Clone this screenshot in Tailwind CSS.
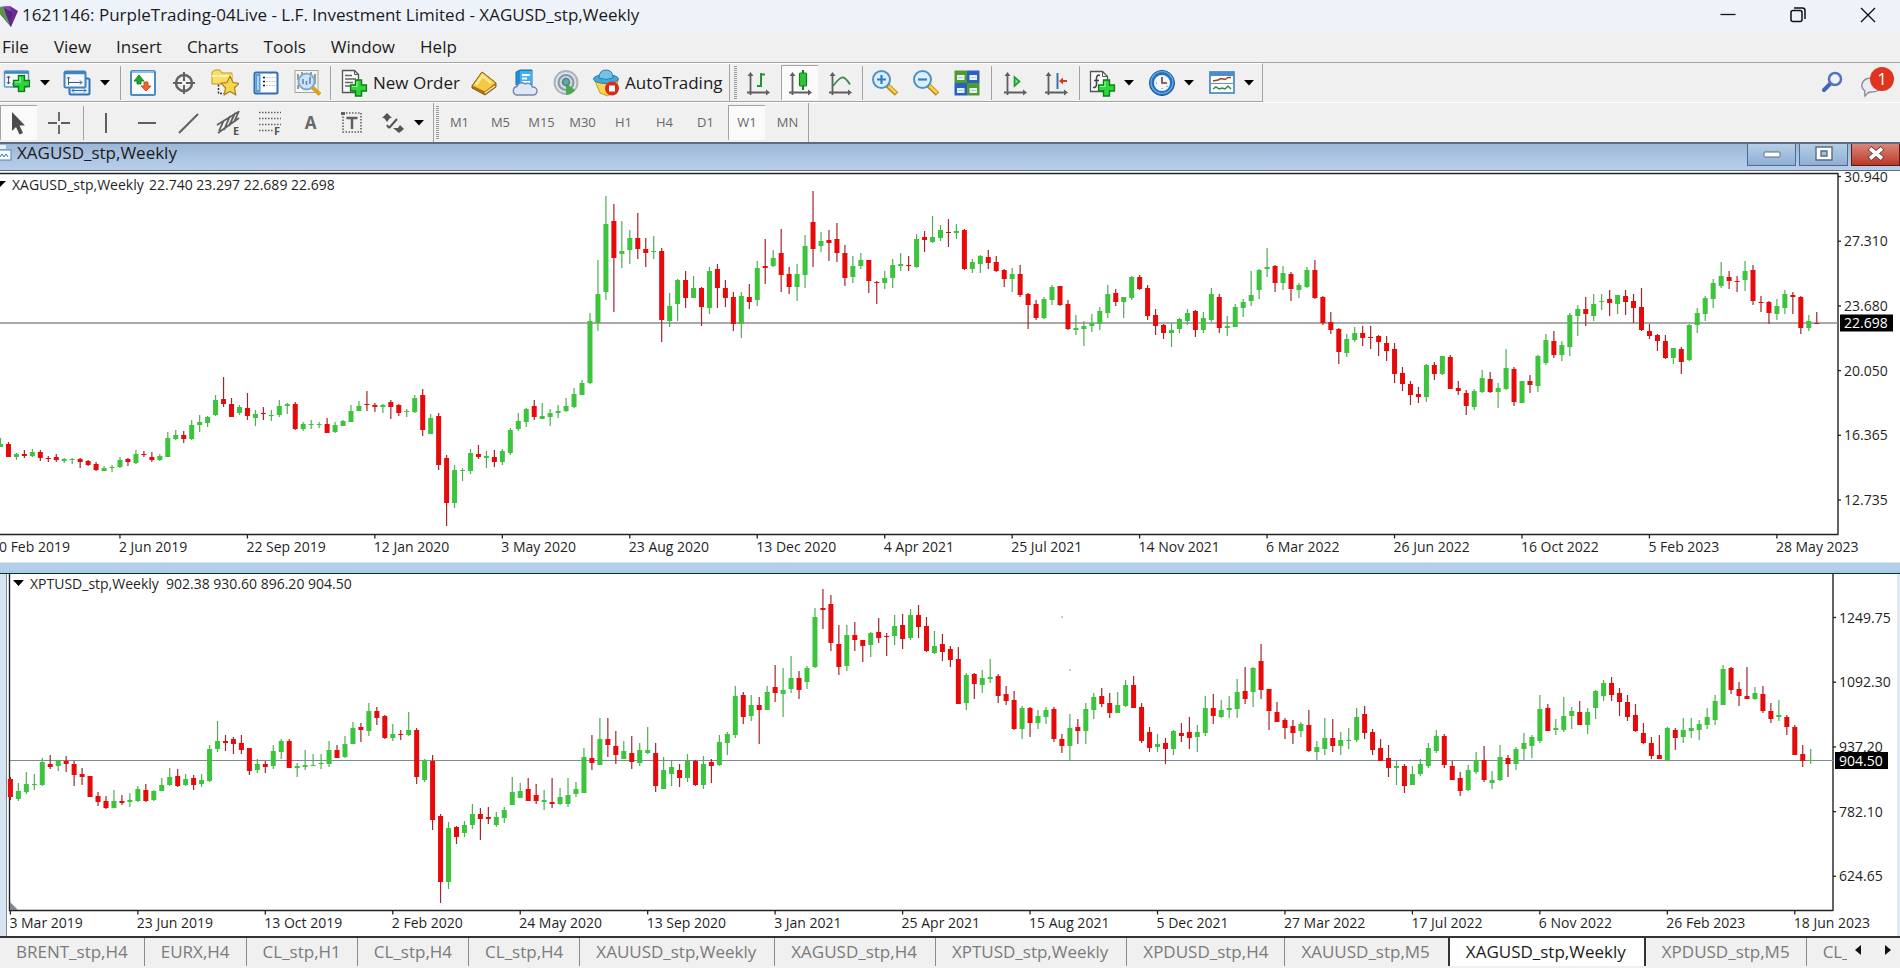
<!DOCTYPE html>
<html lang="en">

<head>
    <meta charset="UTF-8">
    <meta name="viewport" content="width=device-width, initial-scale=1.0">
    <title>XAGUSD_stp,Weekly</title>

    <script src="https://cdn.jsdelivr.net/npm/@tailwindcss/browser@4"></script>
</head>

<body class="bg-[#f0f0f0] font-['Open_Sans','Noto_Sans',sans-serif] text-[17px] text-[#1b1b1b] overflow-x-hidden">

    <!-- shared shapes -->
    <svg class="hidden">
        <symbol id="plus" viewBox="0 0 18 18">
            <path d="M6 1h6v5h5v6h-5v5H6v-5H1V6h5z" fill="#2fd63b" stroke="#0b7d18" stroke-width="1.4" />
            <path d="M7.500 2.500v5h-5" fill="none" stroke="#9df5a0" stroke-width="1.200" />
        </symbol>
        <symbol id="axes" viewBox="0 0 28 28">
            <path d="M6.500 5v21M3 23.500h21" stroke="#5f5f5f" stroke-width="1.800" fill="none" />
            <path d="M6.500 3l-3 4h6zM26 23.500l-4-3v6z" fill="#5f5f5f" />
        </symbol>
        <symbol id="caret" viewBox="0 0 10 6">
            <path d="M0 0h10L5 5.500z" fill="#000" />
        </symbol>
    </svg>

    <!-- title bar -->
    <div class="h-8 pb-[2px] bg-[#eef3f9] flex items-center justify-between">
        <div class="flex items-center">
            <svg class="w-[22px] h-6" viewBox="0 0 22 24">
                <path d="M0 4L10 3l8 5-7 16L0 11z" fill="#6d2c91" />
                <path d="M0 4l10-1 1 5-11 3z" fill="#8a4bb0" />
                <path d="M0 4l3 0 8 20L0 10z" fill="#5b9a3c" />
                <path d="M4 5l7 19 1-15z" fill="#5a2384" />
            </svg>
            <h1>1621146: PurpleTrading-04Live - L.F. Investment Limited - XAGUSD_stp,Weekly</h1>
        </div>
        <div class="flex items-center pr-[22px] gap-[50px]">
            <button aria-label="Minimize" class="w-5 h-5"><svg viewBox="0 0 20 20"><path d="M2.500 9.500h15" stroke="#111" stroke-width="1.300" /></svg></button>
            <button aria-label="Restore" class="w-5 h-5"><svg viewBox="0 0 20 20" fill="none" stroke="#111" stroke-width="1.500"><rect x="3" y="5.500" width="11" height="11" rx="2" /><path d="M6 3h8.500q2.500 0 2.500 2.500V14" /></svg></button>
            <button aria-label="Close" class="w-5 h-5"><svg viewBox="0 0 20 20"><path d="M3 3l14 14M17 3L3 17" stroke="#111" stroke-width="1.400" /></svg></button>
        </div>
    </div>

    <!-- menu -->
    <nav class="h-[30px] pl-[2px] flex items-center gap-[25px]">
        <button>File</button>
        <button>View</button>
        <button>Insert</button>
        <button>Charts</button>
        <button>Tools</button>
        <button>Window</button>
        <button>Help</button>
    </nav>

    <!-- standard toolbar -->
    <div class="h-10 border-t border-[#a3a3a3] flex justify-between">
        <div class="flex items-center border-b border-r border-[#a3a3a3] border-t border-t-white pr-2">
            <button aria-label="New chart" class="w-[34px] flex justify-center">
                <svg class="w-7 h-7" viewBox="0 0 28 28">
                    <rect x="1.500" y="2" width="24" height="16" rx="1" fill="#f4f9fe" stroke="#5a9bd0" stroke-width="1.500" />
                    <path d="M1.500 3.500h24" stroke="#3f83c0" stroke-width="2.500" />
                    <path d="M5.500 7v8M3.800 9l1.700-2 1.700 2M3.800 13l1.700 2 1.700-2M9 15h5" stroke="#4b5560" fill="none" />
                    <use href="#plus" x="9.500" y="5.500" width="18" height="18" />
                </svg>
            </button>
            <button aria-label="New chart list" class="w-[22px] flex justify-center"><svg class="w-[10px] h-[6px]"><use href="#caret" /></svg></button>
            <button aria-label="Profiles" class="w-[42px] flex justify-center">
                <svg class="w-7 h-7" viewBox="0 0 28 28">
                    <rect x="6.500" y="9.500" width="20" height="16" rx="1.500" fill="#e4effa" stroke="#3674b2" stroke-width="2" />
                    <path d="M9 21.500h14M9 21.500l2-2M9 21.500l2 2M23 21.500l-2-2M23 21.500l-2 2" stroke="#3b6fa5" fill="none" />
                    <rect x="1.500" y="2.500" width="21" height="16" rx="1.500" fill="#f4f9fe" stroke="#3f83c0" stroke-width="2" />
                    <path d="M1.500 4h21" stroke="#3f83c0" stroke-width="2.500" />
                    <path d="M5.500 8v8M5.500 13.500h13M17 11.500l2 2-2 2M4 9.500l1.500-1.500 1.500 1.500" stroke="#45576a" fill="none" />
                </svg>
            </button>
            <button aria-label="Profiles list" class="w-[14px] flex justify-center"><svg class="w-[10px] h-[6px]"><use href="#caret" /></svg></button>
            <div class="w-px h-[34px] bg-[#a3a3a3] ml-2 mr-[1px]"></div>
            <button aria-label="Market Watch" class="w-[41px] flex justify-center">
                <svg class="w-7 h-7" viewBox="0 0 28 28">
                    <rect x="2" y="2" width="24" height="24" rx="1.500" fill="#fbfdff" stroke="#4a8cc6" stroke-width="2" />
                    <path d="M3 3h22" stroke="#8fbde6" stroke-width="2" />
                    <path d="M10 6l5 6h-3v3H8v-3H5z" fill="#25a52b" stroke="#11771a" stroke-width=".8" />
                    <path d="M17 22l-5-5h3v-4h4v4h3z" fill="#f0642c" stroke="#c33d12" stroke-width=".8" />
                </svg>
            </button>
            <button aria-label="Data Window" class="w-[41px] flex justify-center">
                <svg class="w-7 h-7" viewBox="0 0 28 28" fill="none" stroke="#626262">
                    <circle cx="14" cy="14" r="8" stroke-width="2.500" />
                    <path d="M14 3v9M14 16v9M3 14h9M16 14h9" stroke-width="2" />
                </svg>
            </button>
            <button aria-label="Navigator" class="w-[41px] flex justify-center">
                <svg class="w-7 h-7" viewBox="0 0 28 28">
                    <path d="M1 15V3l3-2h5l2 3h10v11z" fill="#f9df6a" stroke="#c19a1d" />
                    <path d="M1 7h20" stroke="#fdf3b0" stroke-width="2" />
                    <path d="M7.500 15.500v9h6" stroke="#333" stroke-width="1.500" stroke-dasharray="2 1.500" fill="none" />
                    <path d="M19 7l3 6.500 6 .8-4.500 4.500 1.200 7L19 22.500l-5.700 3.300 1.200-7L10 14.300l6-.8z" fill="#fbd54b" stroke="#a9801c" stroke-width="1.200" />
                </svg>
            </button>
            <button aria-label="Terminal" class="w-[41px] flex justify-center">
                <svg class="w-7 h-7" viewBox="0 0 28 28">
                    <rect x="2.500" y="3.500" width="23" height="21" rx="1.500" fill="#fdfeff" stroke="#2f6fb0" stroke-width="2" />
                    <rect x="3.500" y="4.500" width="5" height="19" fill="#5b9bdc" />
                    <path d="M6 7v14" stroke="#cfe4f8" stroke-width="1.500" />
                    <path d="M11 8.500h2M11 12.500h2M11 16.500h2" stroke="#111" stroke-width="1.500" />
                    <path d="M14.500 8.500h9M14.500 12.500h9M14.500 16.500h9" stroke="#b8c2cc" stroke-dasharray="1.500 1" />
                </svg>
            </button>
            <button aria-label="Strategy Tester" class="w-[41px] flex justify-center">
                <svg class="w-7 h-7" viewBox="0 0 28 28">
                    <rect x="2" y="1.500" width="23" height="22" fill="#f7f5f0" stroke="#a8a49c" />
                    <path d="M5 5v6M9 3v5M18 3v6M22 5v10M5 16v4" stroke="#7a7a7a" stroke-width="1.500" />
                    <path d="M19 18l8 7.500" stroke="#d9a320" stroke-width="4" />
                    <circle cx="13.500" cy="12.500" r="8" fill="#c4e0f7" fill-opacity=".85" stroke="#7ba9d0" stroke-width="2" />
                    <path d="M10 15v-5M13.500 16v-4M17 15V8" stroke="#5c83a8" fill="none" stroke-width="1.500" />
                </svg>
            </button>
            <div class="w-px h-[34px] bg-[#a3a3a3] ml-[3px] mr-[9px]"></div>
            <button class="flex items-center gap-[5px] w-[123px]">
                <svg class="w-7 h-7 shrink-0" viewBox="0 0 28 28">
                    <path d="M2.500 1.500h12l4 4v18h-16z" fill="#fafafa" stroke="#555" stroke-width="1.300" />
                    <path d="M14.500 1.500v4h4" fill="none" stroke="#555" />
                    <path d="M5 6.500h7M5 10h11M5 13.500h8M5 17h6" stroke="#666" stroke-width="1.500" />
                    <use href="#plus" x="9.500" y="10" width="18" height="18" />
                </svg>
                New Order
            </button>
            <button aria-label="MetaEditor" class="w-[41px] flex justify-center">
                <svg class="w-7 h-7" viewBox="0 0 28 28">
                    <path d="M2 17L12 3l14 11v4L15 26 2 19z" fill="#b57a12" stroke="#8c5c0b" />
                    <path d="M2 17L12 3l14 11-11 9z" fill="#f5c944" stroke="#9a6a10" />
                    <path d="M6 16l6.500-9.500L21 14" fill="none" stroke="#fdeaa0" stroke-width="2.500" />
                    <path d="M15 24l10-7" stroke="#f7efd8" stroke-width="1.200" />
                </svg>
            </button>
            <button aria-label="Virtual Hosting" class="w-[41px] flex justify-center">
                <svg class="w-7 h-7" viewBox="0 0 28 28">
                    <path d="M5 3l4-2h12v15H5z" fill="#1f8fd8" stroke="#1670ae" />
                    <path d="M9 2h12v14H9z" fill="#42b1f2" />
                    <path d="M11 6h8M11 9.500h5M11 13h8" stroke="#fff" stroke-width="1.800" />
                    <path d="M6 26a4.300 4.300 0 0 1 0-8.500 5 5 0 0 1 8-2.500 5 5 0 0 1 7.500 3 4 4 0 0 1 1 8z" fill="#dfe7f5" stroke="#7585a8" stroke-width="1.400" />
                </svg>
            </button>
            <button aria-label="Signals" class="w-[41px] flex justify-center">
                <svg class="w-7 h-7" viewBox="0 0 28 28" fill="none">
                    <circle cx="14" cy="13.500" r="11.500" fill="#dfe4e6" stroke="#a9b5bd" stroke-width="2" />
                    <circle cx="14" cy="13.500" r="7.500" fill="#cfd8dc" stroke="#8696a3" stroke-width="2" />
                    <path d="M14 14v12a12 12 0 0 0 9-5z" fill="#46ab4d" />
                    <circle cx="14" cy="13" r="3.500" fill="#5fae85" stroke="#4c7fa8" stroke-width="1.500" />
                </svg>
            </button>
            <button class="flex items-center gap-[5px] ml-[6px]">
                <svg class="w-7 h-7 shrink-0" viewBox="0 0 28 28">
                    <path d="M3 12l5 12 8 3 8-6 2-10z" fill="#f7d452" stroke="#c59b20" />
                    <ellipse cx="14" cy="10" rx="12.500" ry="4.500" fill="#4aa5d4" stroke="#2b7fae" />
                    <path d="M7 9q0-8 7-8t7 8q-7 3-14 0z" fill="#73c3e8" stroke="#2b7fae" />
                    <circle cx="20" cy="19.500" r="7" fill="#d92a1c" />
                    <rect x="17" y="16.500" width="6" height="6" fill="#fff" />
                </svg>
                AutoTrading
            </button>
            <div class="w-px h-[38px] bg-[#a3a3a3] ml-[6px]"></div>
            <div class="w-[3px] h-[34px] ml-1 mr-[1px] bg-[repeating-linear-gradient(#9a9a9a_0_1px,#f0f0f0_1px_2px)]"></div>
            <button aria-label="Bar Chart" class="w-[41px] flex justify-center">
                <svg class="w-7 h-7" viewBox="0 0 28 28">
                    <use href="#axes" />
                    <path d="M17 4v14M17 5.500h4M13 17h4" stroke="#1d9a2c" stroke-width="2" fill="none" />
                </svg>
            </button>
            <button aria-label="Candlesticks" class="w-[37px] h-[35px] mx-[2px] flex justify-center items-center bg-[#fafafa] border-l border-t border-[#a3a3a3]">
                <svg class="w-7 h-7" viewBox="0 0 28 28">
                    <use href="#axes" />
                    <path d="M17 1v20" stroke="#12801d" stroke-width="2" />
                    <rect x="13.500" y="4" width="7" height="13" rx="1" fill="#2fc53b" stroke="#12801d" stroke-width="1.200" />
                </svg>
            </button>
            <button aria-label="Line Chart" class="w-[41px] flex justify-center">
                <svg class="w-7 h-7" viewBox="0 0 28 28">
                    <use href="#axes" />
                    <path d="M7 17q7-9 10-8.500t7 7" stroke="#3f8a48" stroke-width="1.800" fill="none" />
                </svg>
            </button>
            <div class="w-px h-[34px] bg-[#a3a3a3] ml-px mr-[2px]"></div>
            <button aria-label="Zoom In" class="w-[41px] flex justify-center">
                <svg class="w-7 h-7" viewBox="0 0 28 28">
                    <path d="M16 16l9.500 9" stroke="#b98a12" stroke-width="5" />
                    <path d="M17 16.500l8 7.500" stroke="#f5d24a" stroke-width="2.500" />
                    <circle cx="10.500" cy="10.500" r="8.500" fill="#dcf0fc" stroke="#4d93c8" stroke-width="2" />
                    <path d="M10.500 6v9M6 10.500h9" stroke="#2f7ebd" stroke-width="2.200" />
                </svg>
            </button>
            <button aria-label="Zoom Out" class="w-[41px] flex justify-center">
                <svg class="w-7 h-7" viewBox="0 0 28 28">
                    <path d="M16 16l9.500 9" stroke="#b98a12" stroke-width="5" />
                    <path d="M17 16.500l8 7.500" stroke="#f5d24a" stroke-width="2.500" />
                    <circle cx="10.500" cy="10.500" r="8.500" fill="#dcf0fc" stroke="#4d93c8" stroke-width="2" />
                    <path d="M6 10.500h9" stroke="#2f7ebd" stroke-width="2.200" />
                </svg>
            </button>
            <button aria-label="Tile Windows" class="w-[41px] flex justify-center">
                <svg class="w-7 h-7" viewBox="0 0 28 28">
                    <path d="M1.500 1.500h12.500v12.500h-12.500zM14 14h12.500v12.500h-12.500z" fill="#4e9b2e" />
                    <path d="M14 1.500h12.500v12.500h-12.500zM1.500 14h12.500v12.500h-12.500z" fill="#2a5fc4" />
                    <path d="M4 6h7.500v5h-7.500zM16.500 6h7.500v5h-7.500zM4 19h7.500v5h-7.500zM16.500 19h7.500v5h-7.500z" fill="#e9f0fa" />
                    <path d="M5 8.500h5M18 8.500h5M5 21.500h5M18 21.500h5" stroke="#b5c8e2" />
                </svg>
            </button>
            <div class="w-px h-[34px] bg-[#a3a3a3] mx-[3px]"></div>
            <button aria-label="Auto Scroll" class="w-[41px] flex justify-center">
                <svg class="w-7 h-7" viewBox="0 0 28 28">
                    <use href="#axes" />
                    <path d="M13.500 8l5 4.500-5 4.500z" fill="#7ddf84" stroke="#1c9a2a" stroke-width="1.600" />
                </svg>
            </button>
            <button aria-label="Chart Shift" class="w-[41px] flex justify-center">
                <svg class="w-7 h-7" viewBox="0 0 28 28">
                    <use href="#axes" />
                    <path d="M15.500 4v16" stroke="#3a72a8" stroke-width="2" />
                    <path d="M17 12l4-3.500v2.500h4v2h-4v2.500z" fill="#c8401c" />
                </svg>
            </button>
            <div class="w-px h-[34px] bg-[#a3a3a3] mx-[2px]"></div>
            <button aria-label="Indicators" class="w-[41px] flex justify-center">
                <svg class="w-7 h-7" viewBox="0 0 28 28">
                    <path d="M2.500 2.500h12l5 5v15h-17z" fill="#fafafa" stroke="#555" stroke-width="1.300" />
                    <path d="M14.500 2.500v5h5" fill="none" stroke="#555" />
                    <path d="M12 6.500q-3-1.500-3.500 2.500v6q0 4-3.500 3.500M6 11.500h5" fill="none" stroke="#444" stroke-width="1.600" />
                    <use href="#plus" x="9.500" y="10" width="18" height="18" />
                </svg>
            </button>
            <button aria-label="Indicators list" class="w-[19px]"><svg class="w-[10px] h-[6px] ml-px"><use href="#caret" /></svg></button>
            <button aria-label="Periods" class="w-[41px] flex justify-center">
                <svg class="w-7 h-7" viewBox="0 0 28 28">
                    <circle cx="14" cy="14" r="12.500" fill="#2271c0" stroke="#154f92" />
                    <circle cx="14" cy="13.500" r="11" fill="none" stroke="#64aae6" stroke-width="1.200" />
                    <circle cx="14" cy="14" r="8" fill="#f3f7fb" />
                    <path d="M14 8v6h5" stroke="#7a3a22" stroke-width="1.600" fill="none" />
                    <path d="M8 14h1M14 20v-1M19.500 18l-1-1" stroke="#667" />
                </svg>
            </button>
            <button aria-label="Periods list" class="w-[19px]"><svg class="w-[10px] h-[6px] ml-px"><use href="#caret" /></svg></button>
            <button aria-label="Templates" class="w-[41px] flex justify-center">
                <svg class="w-7 h-7" viewBox="0 0 28 28">
                    <rect x="2" y="3" width="24" height="21" fill="#fdfeff" stroke="#3f7fbe" stroke-width="1.600" />
                    <path d="M2 5h24" stroke="#4b8ccb" stroke-width="4" />
                    <path d="M3 14.500h22" stroke="#6a93ba" />
                    <path d="M5 12l5-1 3-1.500 4 1 3-2h3" stroke="#a23c22" stroke-width="1.500" fill="none" />
                    <path d="M5 20l3-2 3 2 3-1 3 1 3-3 3 3" stroke="#2f8f3a" stroke-width="1.500" fill="none" />
                </svg>
            </button>
            <button aria-label="Templates list" class="w-[10px] ml-px"><svg class="w-[10px] h-[6px]"><use href="#caret" /></svg></button>
        </div>

        <div class="flex items-center pr-1 gap-3">
            <button aria-label="Search">
                <svg class="w-7 h-7" viewBox="0 0 28 28">
                    <path d="M6 21l7-7" stroke="#3f66b5" stroke-width="4" stroke-linecap="round" />
                    <circle cx="17" cy="10" r="6" fill="#eef2fb" stroke="#5573bd" stroke-width="2.500" />
                </svg>
            </button>
            <button aria-label="Notifications" class="relative">
                <svg class="w-[38px] h-9" viewBox="0 0 38 36">
                    <path d="M7 31q-1-3 0-5-4-3-3-7 2-6 9-6h10v11q-4 3-10 3-3 0-6 4z" fill="#ececf0" stroke="#8e8a9a" stroke-width="1.400" />
                </svg>
                <span class="absolute right-[2px] top-[2px] w-6 h-6 rounded-full bg-[#e0341f] text-white text-[17px] leading-6 text-center">1</span>
            </button>
        </div>
    </div>

    <!-- line studies and periods toolbar -->
    <div class="h-10 flex text-[#686868] text-[13px] font-medium border-t border-white">
        <div class="flex items-center">
            <button aria-label="Cursor" class="w-[37px] h-[35px] flex justify-center items-center bg-[#fafafa] border-l border-t border-[#a3a3a3]">
                <svg class="w-7 h-7" viewBox="0 0 28 28"><path d="M7 3v19l4-4 3.500 7.500 3.500-1.500-3.500-7.500h5.500z" fill="#4c4c4c" /></svg>
            </button>
            <button aria-label="Crosshair" class="w-[43px] flex justify-center">
                <svg class="w-7 h-7" viewBox="0 0 28 28"><path d="M14 3v9M14 16v9M3 14h9M16 14h9" stroke="#5f5f5f" stroke-width="1.800" /></svg>
            </button>
            <div class="w-px h-[34px] bg-[#a3a3a3] ml-[3px] mr-px"></div>
            <button aria-label="Vertical Line" class="w-[41px] flex justify-center">
                <svg class="w-7 h-7" viewBox="0 0 28 28"><path d="M14 4v20" stroke="#5f5f5f" stroke-width="2" /></svg>
            </button>
            <button aria-label="Horizontal Line" class="w-[41px] flex justify-center">
                <svg class="w-7 h-7" viewBox="0 0 28 28"><path d="M5 14h18" stroke="#5f5f5f" stroke-width="2" /></svg>
            </button>
            <button aria-label="Trendline" class="w-[41px] flex justify-center">
                <svg class="w-7 h-7" viewBox="0 0 28 28"><path d="M5 24L24 5" stroke="#5f5f5f" stroke-width="2" /></svg>
            </button>
            <button aria-label="Equidistant Channel" class="w-[41px] flex justify-center">
                <svg class="w-7 h-7 overflow-visible" viewBox="0 0 28 28">
                    <path d="M2 16L23 3M3 24L24 9M4 22l5-11M9 21l6-14M14 17l6-13M19 13l5-11" stroke="#5f5f5f" stroke-width="1.800" fill="none" />
                    <text x="18" y="26" font-size="11" font-weight="700" fill="#555">E</text>
                </svg>
            </button>
            <button aria-label="Fibonacci" class="w-[41px] flex justify-center">
                <svg class="w-7 h-7 overflow-visible" viewBox="0 0 28 28">
                    <path d="M3 3.500h22M3 9.500h22M3 15.500h22M3 21.500h14" stroke="#5f5f5f" stroke-width="1.600" stroke-dasharray="1.500 1.500" />
                    <text x="18" y="26" font-size="11" font-weight="700" fill="#555">F</text>
                </svg>
            </button>
            <button aria-label="Text" class="w-[41px] text-center text-[17px] font-bold">A</button>
            <button aria-label="Text Label" class="w-[41px] flex justify-center">
                <svg class="w-7 h-7" viewBox="0 0 28 28">
                    <rect x="5" y="4" width="18" height="19" fill="none" stroke="#5f5f5f" stroke-width="1.600" stroke-dasharray="1.500 1.500" />
                    <path d="M3 3h4v3H3z" fill="#5f5f5f" />
                    <path d="M8.500 9h11M14 9v11" stroke="#5f5f5f" stroke-width="2.500" />
                </svg>
            </button>
            <button aria-label="Arrows" class="w-[41px] flex justify-center">
                <svg class="w-7 h-7" viewBox="0 0 28 28">
                    <path d="M8 4l5 5h-2l-3 4-3-4H3zM20 24l5-4-4-4-2 3h-5z" fill="#555" />
                    <path d="M10 19l8-9M10 19l-2-3" stroke="#555" stroke-width="2" fill="none" />
                </svg>
            </button>
            <button aria-label="Arrows list" class="w-[20px]"><svg class="w-[10px] h-[6px] ml-px"><use href="#caret" /></svg></button>
            <div class="w-px h-[39px] bg-[#a3a3a3]"></div>
            <div class="w-[3px] h-[34px] ml-[2px] bg-[repeating-linear-gradient(#9a9a9a_0_1px,#f0f0f0_1px_2px)]"></div>
            <button class="w-[41px]">M1</button>
            <button class="w-[41px]">M5</button>
            <button class="w-[41px]">M15</button>
            <button class="w-[41px]">M30</button>
            <button class="w-[41px]">H1</button>
            <button class="w-[41px]">H4</button>
            <button class="w-[41px]">D1</button>
            <button class="w-[37px] h-[35px] mx-[2px] bg-[#fafafa] border-l border-t border-[#a3a3a3]">W1</button>
            <button class="w-[41px]">MN</button>
            <div class="w-px h-[39px] bg-[#a3a3a3]"></div>
        </div>
    </div>

    <main class="bg-white">
        <!-- chart window title -->
        <div class="h-[29px] border-t-2 border-b border-[#5f6b80] bg-linear-to-b from-[#9cb8d6] to-[#b8cfec] flex justify-between items-start text-[17px] leading-[18px]">
            <div class="flex items-start">
                <svg class="w-[17px] h-5" viewBox="0 0 17 20">
                    <rect x="-4" y="6" width="15" height="10" fill="#f5faff" stroke="#4c86c4" />
                    <path d="M0 1h6v4H0z" fill="#e6effa" />
                    <path d="M0 13l2-3 2 3 2-3 2 3" stroke="#4c6c94" fill="none" />
                </svg>
                <h2>XAGUSD_stp,Weekly</h2>
            </div>
            <div class="flex gap-[3px]">
                <button aria-label="Minimize chart" class="w-[49px] h-[22px] border border-t-0 border-[#4f6a8c] bg-linear-to-b from-[#b6cde6] to-[#8fb0d4] flex justify-center items-center">
                    <svg class="w-[18px] h-[7px]"><rect x="1" y="1" width="16" height="5" rx="1" fill="#fff" stroke="#5b6b80" /></svg>
                </button>
                <button aria-label="Restore chart" class="w-[49px] h-[22px] pb-[2px] border border-t-0 border-[#4f6a8c] bg-linear-to-b from-[#b6cde6] to-[#8fb0d4] flex justify-center items-center">
                    <svg class="w-[18px] h-[15px]" viewBox="0 0 18 15"><path d="M1 1h16v13H1zM6 5h6v5H6z" fill="#fff" fill-rule="evenodd" stroke="#5b6b80" stroke-width="1.400" /></svg>
                </button>
                <button aria-label="Close chart" class="w-[49px] h-[22px] pb-[2px] border border-t-0 border-[#5c1a16] bg-linear-to-b from-[#d9867a] to-[#bb3524] flex justify-center items-center">
                    <svg class="w-[18px] h-[15px]" viewBox="0 0 18 15"><path d="M2.500 2l13 11M15.500 2l-13 11" stroke="#6a3a38" stroke-width="5.500" /><path d="M3 2.500l12 10M15 2.500l-12 10" stroke="#fff" stroke-width="3.600" /></svg>
                </button>
            </div>
        </div>

        <!-- XAGUSD -->
        <svg id="xag" class="block w-full bg-white overflow-visible" viewBox="0 171 1900 391" font-size="14" fill="#1f1f1f">
            <path d="M0 173.500H1838M1838 173v361.500M0 534.500h1838.500" stroke="#222" stroke-width="1.400" fill="none" />
            <path d="M0 323h1838" stroke="#8d8d8d" stroke-width="1.300" />
            <path d="M0 181h6l-6 6z" fill="#000" />
            <text x="12" y="190">XAGUSD_stp,Weekly</text>
            <text x="149" y="190">22.740 23.297 22.689 22.698</text>
        </svg>

        <div class="h-3 border-t border-[#dde3ea] border-b border-b-[#1c2a36] bg-linear-to-b from-[#b5cfeb] from-50% to-[#9fcfe9]"></div>

        <!-- XPTUSD -->
        <div class="flex bg-white">
            <div class="w-[7px] shrink-0 bg-[#d6e3f1] border-r border-[#7e8894]"></div>
            <svg id="xpt" class="block flex-1 min-w-0" viewBox="7 574 1890 362" font-size="14" fill="#1f1f1f">
                <path d="M9.500 574v336.500H1833M1833 574v337" stroke="#222" stroke-width="1.400" fill="none" />
                <path d="M10 760.500h1823" stroke="#7d8c94" stroke-width="1.200" />
                <path d="M13 580h11l-5.500 6z" fill="#000" />
                <path d="M10 902l8 8h-8z" fill="#7b8490" />
                <path d="M1061 617h2M1069 670h2" stroke="#999" />
                <text x="30" y="589">XPTUSD_stp,Weekly</text>
                <text x="166" y="589">902.38 930.60 896.20 904.50</text>
            </svg>
            <div class="w-[3px] shrink-0 bg-[#dfe8f4]"></div>
        </div>
    </main>

    <!-- chart tabs -->
    <div class="h-8 flex items-start text-[#7b7b7b] leading-[28px] border-t-2 border-[#333] whitespace-nowrap overflow-hidden">
        <div class="flex flex-1 min-w-0 overflow-hidden">
            <button class="shrink-0 px-4 border-r border-[#8a8a8a]">BRENT_stp,H4</button>
            <button class="shrink-0 px-4 border-r border-[#8a8a8a]">EURX,H4</button>
            <button class="shrink-0 px-4 border-r border-[#8a8a8a]">CL_stp,H1</button>
            <button class="shrink-0 px-4 border-r border-[#8a8a8a]">CL_stp,H4</button>
            <button class="shrink-0 px-4 border-r border-[#8a8a8a]">CL_stp,H4</button>
            <button class="shrink-0 pl-4 pr-[18px] border-r border-[#8a8a8a]">XAUUSD_stp,Weekly</button>
            <button class="shrink-0 pl-4 pr-[18px] border-r border-[#8a8a8a]">XAGUSD_stp,H4</button>
            <button class="shrink-0 pl-4 pr-[18px] border-r border-[#8a8a8a]">XPTUSD_stp,Weekly</button>
            <button class="shrink-0 px-4 border-r border-[#8a8a8a]">XPDUSD_stp,H4</button>
            <button class="shrink-0 pl-4 pr-[18px]">XAUUSD_stp,M5</button>
            <button class="shrink-0 pl-4 pr-[18px] border-x-2 border-[#333] bg-white text-[#1b1b1b]">XAGUSD_stp,Weekly</button>
            <button class="shrink-0 px-4 border-r border-[#8a8a8a]">XPDUSD_stp,M5</button>
            <button class="shrink-0 pl-4">CL_</button>
        </div>
        <div class="flex items-center h-7 gap-6 pr-[9px] pl-2">
            <button aria-label="Scroll tabs left"><svg class="w-[6px] h-[10px] mb-1"><path d="M6 0v10L0 5z" fill="#111" /></svg></button>
            <button aria-label="Scroll tabs right"><svg class="w-[6px] h-[10px] mb-1"><path d="M0 0v10l6-5z" fill="#111" /></svg></button>
        </div>
    </div>

    <script>

        // one candle: colour, high, body top, body bottom, low
        const xagCandles = `
            g 438 444 447 447;r 442 444 457 457;g 453 454 457 460;r 450 454 456 458;g 449 452 456 457;r 450 452 458 461;
            r 456 458 459 462;r 454 457 460 462;g 458 459 461 463;g 458 459 460 464;r 458 459 462 468;r 460 461 465 466;
            r 462 464 470 471;g 466 468 471 471;g 465 467 468 472;g 457 460 467 468;r 458 459 462 466;g 450 454 463 464;
            r 451 454 455 457;r 452 457 460 462;g 454 456 460 461;g 432 438 457 457;g 430 435 439 440;r 431 435 439 443;
            g 420 425 439 440;g 415 422 425 432;g 416 417 423 427;g 395 400 415 416;r 377 399 404 407;r 398 404 417 417;
            g 405 407 413 415;r 393 408 416 420;g 410 414 418 426;r 407 413 414 420;g 410 415 416 421;g 400 406 415 417;
            g 403 404 406 414;r 402 404 429 430;g 422 424 429 431;g 420 424 425 429;g 422 424 425 428;r 418 424 433 433;
            g 422 425 432 433;g 420 421 426 426;g 405 411 422 422;g 401 406 411 411;r 391 404 405 411;r 403 405 407 412;
            g 404 405 407 413;r 400 402 407 419;r 404 405 413 416;g 409 411 412 417;g 395 398 412 413;r 389 395 430 436;
            g 414 418 434 434;r 413 416 465 470;r 455 458 503 526;g 465 470 503 508;g 468 470 471 481;g 449 453 471 474;
            r 445 454 457 459;g 451 456 458 468;r 450 457 462 467;g 449 451 462 465;g 428 430 453 455;g 413 421 429 431;
            g 408 409 422 427;r 400 406 417 420;g 403 416 419 419;g 409 413 417 426;g 405 411 413 418;g 398 406 411 412;
            g 388 394 407 408;g 380 383 395 395;g 313 321 383 384;g 260 294 323 331;g 196 224 292 300;r 204 221 258 312;
            g 221 251 254 268;g 230 238 250 264;r 213 238 249 259;r 238 249 253 267;g 236 251 252 259;r 248 251 320 342;
            g 293 306 321 327;g 279 280 304 321;r 271 280 298 308;g 276 288 298 298;r 287 288 307 326;g 267 271 308 314;
            r 264 269 288 308;r 280 288 298 307;r 292 297 324 331;g 292 296 324 338;r 284 297 302 309;g 261 268 300 306;
            r 239 266 268 284;g 250 258 266 267;r 229 253 275 292;r 267 274 287 294;g 264 274 287 301;g 235 246 275 288;
            r 191 222 249 267;g 232 241 246 252;r 230 240 243 261;r 223 239 253 262;r 245 253 278 286;g 256 266 277 283;
            g 253 260 266 269;r 260 260 281 293;r 281 282 283 304;g 271 278 283 289;g 259 265 278 288;g 253 264 266 271;
            r 256 265 266 271;g 234 239 267 268;r 231 237 240 252;g 216 237 242 243;g 225 230 238 241;r 219 232 233 247;
            g 224 231 233 239;r 229 230 269 270;g 259 262 269 273;g 255 256 264 273;r 250 257 263 269;r 256 262 271 272;
            r 269 270 279 287;g 268 274 279 292;r 265 274 295 297;r 293 294 305 329;r 300 304 318 320;g 297 299 318 319;
            g 285 287 300 305;r 286 286 305 306;r 300 304 329 330;g 315 328 330 335;g 321 326 329 346;g 314 323 326 332;
            g 307 311 324 330;g 285 294 313 318;r 289 293 302 306;g 297 297 302 318;g 276 277 298 300;r 275 277 289 290;
            r 285 288 316 320;r 309 315 326 335;r 324 325 333 339;g 323 330 333 347;g 318 319 329 333;g 309 313 321 325;
            r 310 311 330 337;g 312 318 330 333;g 288 294 320 322;r 294 297 328 333;g 316 326 328 336;g 304 307 327 327;
            g 299 302 308 317;g 271 295 301 306;g 269 270 290 299;g 248 267 269 277;r 265 266 283 292;g 266 273 283 290;
            r 272 274 289 301;g 283 285 290 298;g 267 270 287 288;r 260 270 298 299;r 296 297 323 325;r 312 322 330 334;
            r 328 329 352 364;g 334 339 353 357;g 327 333 340 342;r 326 333 338 346;r 326 337 338 349;r 335 336 342 356;
            r 336 343 351 361;r 343 349 374 383;r 367 373 384 391;r 381 384 395 405;r 387 394 397 403;g 364 365 397 402;
            r 362 365 374 380;g 356 356 374 375;r 355 357 389 389;r 381 388 391 395;r 390 393 406 415;g 389 391 407 410;
            g 370 378 392 393;r 372 379 392 393;g 383 388 392 408;g 349 368 389 390;r 367 369 402 406;g 381 381 403 403;
            r 375 381 385 393;g 355 356 386 392;g 334 340 363 365;r 331 341 355 358;g 341 345 355 361;g 313 315 347 356;
            g 305 309 316 336;r 297 309 314 326;g 294 304 316 321;g 294 301 302 310;r 290 299 303 316;g 295 295 304 314;
            r 290 296 302 315;r 294 301 308 323;r 288 307 330 331;r 324 331 336 339;r 334 335 341 351;r 335 341 358 359;
            g 348 348 358 364;r 347 349 362 374;g 324 325 360 361;g 308 313 325 333;g 296 298 314 321;g 279 283 299 308;
            g 262 276 286 288;r 271 277 281 289;r 276 281 282 292;g 261 271 280 291;r 265 270 301 305;r 296 302 303 312;
            r 301 302 313 324;g 299 306 314 320;g 290 294 308 314;r 292 295 297 314;r 296 297 328 334;g 315 321 328 331;
            r 312 323 324 324`;

        const xptCandles = `
            r 777 779 797 800;g 783 791 799 801;g 772 784 792 794;g 774 784 785 790;g 758 762 785 786;r 755 764 767 769;
            g 760 761 766 771;r 756 761 764 772;r 761 764 775 786;r 768 774 777 785;r 776 776 797 797;r 792 796 802 806;
            r 796 801 808 809;g 790 801 808 808;r 795 801 803 805;g 793 800 802 807;g 786 789 801 802;r 784 790 801 802;
            g 790 791 800 801;g 778 785 791 791;g 768 777 785 786;r 769 776 786 787;g 774 779 785 786;r 775 778 785 790;
            g 774 780 784 787;g 745 749 781 782;g 721 741 749 752;r 735 741 743 751;r 737 739 744 754;r 735 743 750 754;
            r 748 748 771 775;g 759 764 770 773;r 761 764 767 773;g 745 751 766 769;g 739 741 752 759;r 739 741 768 768;
            g 763 766 768 777;g 750 765 767 770;g 754 765 766 766;g 754 763 764 769;g 741 750 764 767;r 745 750 758 758;
            g 736 744 757 758;g 722 728 744 744;r 723 727 730 742;g 703 711 731 736;r 707 711 718 725;r 715 716 738 739;
            g 724 734 738 741;r 730 734 735 740;g 712 730 735 736;r 728 730 777 784;g 759 760 780 782;r 755 761 820 830;
            r 814 816 882 903;g 822 828 882 889;r 826 827 837 844;g 821 825 833 837;g 804 814 825 829;r 808 814 819 840;
            r 807 817 819 824;g 812 817 825 827;g 807 810 818 823;g 777 792 805 805;g 783 791 798 798;r 778 789 801 801;
            r 784 795 801 804;g 790 800 802 810;r 778 802 804 808;g 788 797 804 805;g 778 795 804 807;g 782 789 794 797;
            g 748 757 793 793;r 735 758 763 770;g 718 739 765 765;r 718 739 745 757;r 731 746 755 764;g 741 751 759 759;
            r 736 753 762 769;g 743 750 763 766;g 727 750 753 754;r 743 753 786 792;g 757 770 789 789;g 761 767 774 786;
            r 764 770 778 787;g 754 761 778 782;r 760 761 785 786;g 756 764 785 789;r 759 762 766 783;g 735 742 765 766;
            g 732 734 743 755;g 686 696 735 738;r 692 695 717 724;g 695 705 716 721;r 697 705 710 744;g 686 692 710 710;
            r 665 687 693 702;g 668 690 694 717;g 656 678 689 693;r 671 678 690 699;g 666 668 682 689;g 608 617 667 668;
            r 589 608 610 629;r 595 604 643 651;r 625 644 667 675;g 625 635 666 671;r 622 635 640 651;r 640 640 646 662;
            g 632 633 645 657;r 618 632 638 643;r 633 636 637 656;g 615 626 636 645;r 614 625 639 649;g 609 615 638 640;
            r 605 615 627 638;r 617 626 651 652;g 631 646 653 654;r 634 644 652 661;r 646 649 660 667;r 647 659 704 704;
            g 673 675 703 710;r 673 674 684 699;g 670 678 685 693;g 659 677 679 683;r 674 676 696 703;r 686 694 701 705;
            r 691 700 729 730;g 706 708 729 739;r 707 708 723 737;g 710 716 723 729;g 707 710 717 724;r 707 709 739 742;
            r 734 739 746 753;g 714 728 746 761;r 719 727 731 744;g 703 709 731 744;g 693 697 710 719;r 688 696 704 707;
            r 693 703 713 718;g 692 705 713 713;g 680 685 706 707;r 676 685 708 708;r 703 707 741 743;r 727 732 748 752;
            g 734 744 747 752;r 738 743 749 764;g 730 731 749 755;r 723 733 736 742;r 717 732 738 749;g 725 732 737 752;
            g 696 708 733 736;r 694 708 716 724;g 700 710 717 718;g 696 708 710 718;g 679 692 709 718;r 667 691 699 704;
            g 667 668 692 707;r 644 661 690 699;r 689 689 711 730;r 702 712 722 722;r 718 720 728 739;r 720 726 733 744;
            g 722 724 731 737;r 710 725 751 752;g 741 747 752 760;g 718 738 749 755;r 719 738 746 752;g 732 740 746 755;
            g 728 740 741 749;g 708 717 740 742;r 706 714 733 739;r 729 732 750 755;r 739 748 761 761;r 745 758 768 777;
            g 761 766 768 785;r 764 766 786 793;g 766 774 785 785;g 759 764 774 776;g 743 748 766 768;g 730 736 751 753;
            r 734 736 765 768;r 761 766 780 780;r 772 778 791 796;g 765 770 790 791;g 752 760 772 774;r 746 760 780 782;
            g 771 780 783 789;g 745 757 780 781;r 755 758 764 777;g 747 749 764 770;g 733 743 749 760;g 735 737 746 758;
            g 695 709 741 743;r 704 708 731 731;g 719 728 730 735;g 697 716 730 732;g 707 711 716 729;r 701 712 725 725;
            g 708 712 725 734;g 690 691 708 719;g 680 683 696 701;r 677 683 695 701;r 688 693 702 716;r 695 702 717 721;
            r 704 715 731 732;r 723 733 743 744;r 737 743 756 759;r 735 755 759 759;g 727 728 760 760;r 728 730 738 750;
            g 718 730 737 743;g 718 728 731 738;g 720 724 730 740;g 708 717 725 729;g 695 701 720 725;g 665 669 705 705;
            r 667 668 690 694;r 682 689 696 706;r 667 696 699 699;g 687 693 699 700;r 686 694 711 713;r 703 711 719 723;
            g 700 715 717 721;r 715 717 727 735;r 725 727 755 755;r 745 754 761 767;g 749 760 761 764`;

        const step = 7.966;

        function drawChart(id, chart) {
            let out = '';

            chart.candles.trim().split(';').forEach((row, i) => {
                const [colour, ...v] = row.trim().split(' ');
                const [high, top, bottom, low] = v.map(Number);
                const x = chart.x0 + i * step;
                const wick = colour == 'g' ? '#4fae57' : '#a3262c';
                const body = colour == 'g' ? '#3cc43c' : '#e60a0a';
                out += `<rect x="${x - 0.6}" y="${high}" width="1.2" height="${low - high}" fill="${wick}"/>`;
                out += `<rect x="${x - 2.5}" y="${top}" width="5" height="${Math.max(bottom - top, 1)}" fill="${body}"/>`;
            });

            chart.dates.forEach((date, i) => {
                const x = chart.dateX + i * step * 16;
                out += `<path d="M${x} ${chart.bottom}v4" stroke="#222" stroke-width="1.3"/>`;
                out += `<text x="${Math.max(x, chart.minX) - 1}" y="${chart.bottom + 17.5}">${date}</text>`;
            });

            chart.prices.forEach((price, i) => {
                const y = chart.priceY + i * 64.7;
                out += `<path d="M${chart.right} ${y}h3" stroke="#222" stroke-width="1.3"/>`;
                out += `<text x="${chart.right + 6}" y="${y + 5}">${price}</text>`;
            });

            out += `<rect x="${chart.right + 2}" y="${chart.nowY - 8.5}" width="53" height="17" fill="#000"/>`;
            out += `<text x="${chart.right + 6}" y="${chart.nowY + 5}" fill="#fff">${chart.now}</text>`;

            document.getElementById(id).insertAdjacentHTML('beforeend', out);
        }

        drawChart('xag', {
            candles: xagCandles, x0: 0.5, dateX: -7.5, minX: 0, right: 1838, bottom: 534.5,
            dates: ['0 Feb 2019', '2 Jun 2019', '22 Sep 2019', '12 Jan 2020', '3 May 2020', '23 Aug 2020', '13 Dec 2020', '4 Apr 2021',
                '25 Jul 2021', '14 Nov 2021', '6 Mar 2022', '26 Jun 2022', '16 Oct 2022', '5 Feb 2023', '28 May 2023'],
            prices: ['30.940', '27.310', '23.680', '20.050', '16.365', '12.735'], priceY: 176.5, now: '22.698', nowY: 323
        });

        drawChart('xpt', {
            candles: xptCandles, x0: 10.4, dateX: 10.4, minX: 10, right: 1833, bottom: 910.5,
            dates: ['3 Mar 2019', '23 Jun 2019', '13 Oct 2019', '2 Feb 2020', '24 May 2020', '13 Sep 2020', '3 Jan 2021', '25 Apr 2021',
                '15 Aug 2021', '5 Dec 2021', '27 Mar 2022', '17 Jul 2022', '6 Nov 2022', '26 Feb 2023', '18 Jun 2023'],
            prices: ['1249.75', '1092.30', '937.20', '782.10', '624.65'], priceY: 617.5, now: '904.50', nowY: 760.5
        });

    </script>
</body>

</html>
